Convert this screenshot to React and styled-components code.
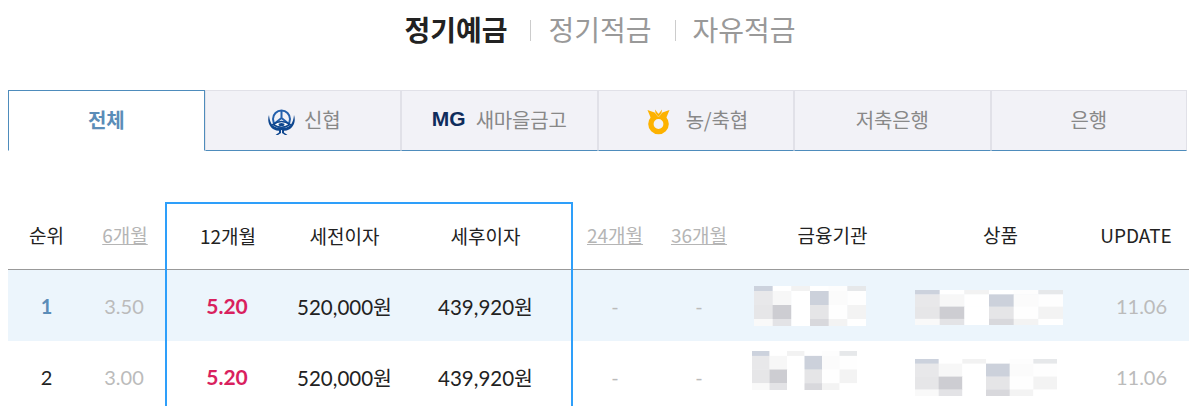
import React from 'react'
import styled, { createGlobalStyle } from 'styled-components'

const CJK = '"Noto Sans CJK KR", "Noto Sans", sans-serif'
const NUM = 'Lato, "Noto Sans CJK KR", sans-serif'

const GlobalStyle = createGlobalStyle`
  html, body {
    margin: 0;
    padding: 0;
    background: #fff;
    overflow: hidden;
  }
  body {
    font-family: ${CJK};
    height: 406px;
  }
`

const tabs = [
  { label: '전체' },
  { label: '신협', icon: 'cu' },
  { label: '새마을금고', icon: 'mg' },
  { label: '농/축협', icon: 'nh' },
  { label: '저축은행' },
  { label: '은행' },
]

const mosaicA = [
  ['#ccd2dd', '#ffffff', '#f2f2f2', '#ffffff', '#fdfdfd', '#e6e8ea'],
  ['#e8e8ea', '#f7f7f7', '#ffffff', '#ccd1db', '#fbfbfb', '#fefefe'],
  ['#e6e6e8', '#cdcdd2', '#ffffff', '#e5e5e7', '#fefefe', '#f3f3f3'],
  ['#f9f9f9', '#e3e3e6', '#ffffff', '#d8d8dc', '#f3f3f3', '#ffffff'],
]

const rows = [
  {
    rank: '1', six: '3.50', top: true,
    org: { w: 112, h: 40, dx: 13, dy: 0 },
    product: { w: 148, h: 35, dx: -9, dy: 4 },
  },
  {
    rank: '2', six: '3.00',
    org: { w: 105, h: 39, dx: 11, dy: -12 },
    product: { w: 142, h: 37, dx: -9, dy: 2 },
  },
]

function Mosaic({ w, h }) {
  const ys = [0, 0.125, 0.475, 0.825, 1]
  return (
    <svg width={w} height={h} viewBox={`0 0 ${w} ${h}`}>
      {mosaicA.map((line, r) =>
        line.map((fill, c) => (
          <rect
            key={`${r}-${c}`}
            x={(c * w) / 6}
            y={ys[r] * h}
            width={w / 6 + 0.3}
            height={(ys[r + 1] - ys[r]) * h + 0.3}
            fill={fill}
          />
        ))
      )}
    </svg>
  )
}

function CuIcon() {
  return (
    <CuSvg width="27" height="26" viewBox="0 0 27 26" fill="none">
      <circle cx="13.500" cy="10" r="8.500" stroke="#2460ac" strokeWidth="2" />
      <path d="M13.500 2v7M6 15l7.500-6 7.500 6" stroke="#2460ac" strokeWidth="2" />
      <path d="M5 15.500Q13.500 9.500 22 15.500Q13.500 21 5 15.500z" fill="#fff" stroke="#0f478f" strokeWidth="1.600" />
      <ellipse cx="13.500" cy="15.500" rx="3" ry="1.500" fill="#0f478f" />
      <path
        d="M1 6C-1 12 1 18 6 20.500c3 1.500 5.500 1.500 7.500.5 2 1 4.500 1 7.500-.5 5-2.500 7-8.500 5-14.500-.5 5.500-2 9.500-5.500 11.500-2.500 1.500-5 1.800-7 .8-2 1-4.500.7-7-.8C3 15.500 1.500 11.500 1 6z"
        fill="#0f478f"
      />
      <path d="M11 21h2v3l-3 2H7.500l3.500-2.500zM16 21h-2v3l3 2h2.500L16 23.500z" fill="#0f478f" />
    </CuSvg>
  )
}

function NhIcon() {
  return (
    <svg width="24" height="26" viewBox="0 0 24 26" fill="none">
      <circle cx="11.500" cy="15" r="7.600" stroke="#fdb200" strokeWidth="5.400" />
      <path d="M.5 1L7.500 3.500 11.500 7.500 15.500 3.500 22.500 1 19 9.500H4z" fill="#fdb200" />
      <path d="M8 .5l3.500 4.500L15 .5 14 7.500H9z" fill="#fdb200" />
      <path d="M7.800 3.500L11.500 8 15.200 3.500" stroke="#f7d27a" strokeWidth="0.800" />
    </svg>
  )
}

export default function App() {
  return (
    <Page>
      <GlobalStyle />
      <Products>
        <Product $active>정기예금</Product>
        <Sep />
        <Product>정기적금</Product>
        <Sep />
        <Product>자유적금</Product>
      </Products>

      <Tabs>
        {tabs.map((t, i) => (
          <Tab key={t.label} $active={i === 0}>
            {t.icon === 'cu' && <CuIcon />}
            {t.icon === 'mg' && <MgLogo>MG</MgLogo>}
            {t.icon === 'nh' && <NhSlot><NhIcon /></NhSlot>}
            <span>{t.label}</span>
          </Tab>
        ))}
      </Tabs>

      <Table>
        <HeadRow>
          <Cell $w={77}>순위</Cell>
          <LinkCell $w={80}>6개월</LinkCell>
          <Cell $w={124} $left $head>12개월</Cell>
          <Cell $w={111} $head>세전이자</Cell>
          <Cell $w={173} $right $head>세후이자</Cell>
          <LinkCell $w={84}>24개월</LinkCell>
          <LinkCell $w={84}>36개월</LinkCell>
          <Cell $w={183}>금융기관</Cell>
          <Cell $w={153}>상품</Cell>
          <Cell $w={112} $pl={6}>UPDATE</Cell>
        </HeadRow>
        {rows.map((r) => (
          <BodyRow key={r.rank} $top={r.top}>
            <Rank $w={77} $top={r.top}>{r.rank}</Rank>
            <Faint $w={80} $pr={2}>{r.six}</Faint>
            <Rate $w={124} $left $pr={2}>5.20</Rate>
            <Amount $w={111}>520,000원</Amount>
            <Amount $w={173} $right>439,920원</Amount>
            <Faint $w={84}>-</Faint>
            <Faint $w={84}>-</Faint>
            <ImageCell $w={183}>
              <Shift $dx={r.org.dx} $dy={r.org.dy}>
                <Mosaic w={r.org.w} h={r.org.h} />
              </Shift>
            </ImageCell>
            <ImageCell $w={153}>
              <Shift $dx={r.product.dx} $dy={r.product.dy}>
                <Mosaic w={r.product.w} h={r.product.h} />
              </Shift>
            </ImageCell>
            <Faint $w={112} $pl={17}>11.06</Faint>
          </BodyRow>
        ))}
      </Table>
    </Page>
  )
}

const Page = styled.div`
  width: 1189px;
  height: 406px;
  overflow: hidden;
`

const Products = styled.div`
  height: 90px;
  padding-top: 10px;
  box-sizing: border-box;
  display: flex;
  justify-content: center;
  align-items: flex-start;
  gap: 20px;
  padding-left: 11px;
`

const Product = styled.div`
  font-size: 28px;
  line-height: 38px;
  color: ${(p) => (p.$active ? '#222' : '#999')};
  font-weight: ${(p) => (p.$active ? 700 : 400)};
`

const Sep = styled.i`
  width: 1px;
  height: 21px;
  margin: 10px -3px 0 3px;
  background: #ccc;
`

const Tabs = styled.div`
  display: flex;
  margin-left: 8px;
  height: 61px;
  width: 1179px;
`

const Tab = styled.div`
  width: 196.5px;
  box-sizing: border-box;
  display: flex;
  align-items: center;
  justify-content: center;
  gap: 5px;
  font-size: 20px;
  letter-spacing: -0.2px;
  padding-bottom: 3px;
  color: ${(p) => (p.$active ? '#5b8db8' : '#888')};
  font-weight: ${(p) => (p.$active ? 700 : 400)};
  background: ${(p) => (p.$active ? '#fff' : '#f2f2f7')};
  border-top: 1px solid ${(p) => (p.$active ? '#4e8cbc' : '#e1e1e8')};
  border-left: 1px solid ${(p) => (p.$active ? '#4e8cbc' : '#e1e1e8')};
  border-right: 1px solid ${(p) => (p.$active ? '#4e8cbc' : '#e1e1e8')};
  border-bottom: 1px solid ${(p) => (p.$active ? '#fff' : '#4e8cbc')};
`

const CuSvg = styled.svg`
  margin: 6px 4px 0 3px;
`

const MgLogo = styled.b`
  font-family: 'Liberation Sans', Arial, sans-serif;
  font-size: 21px;
  letter-spacing: 0;
  color: #0f2c5c;
  margin-right: 5px;
`

const NhSlot = styled.span`
  display: flex;
  margin: 6px 10px 0 3px;
`

const Table = styled.div`
  margin-top: 51px;
  margin-left: 8px;
  width: 1181px;
`

const HeadRow = styled.div`
  display: flex;
  height: 68px;
  border-bottom: 1px solid #999;
  box-sizing: border-box;
`

const BodyRow = styled.div`
  display: flex;
  height: 71px;
  background: ${(p) => (p.$top ? '#ecf5fc' : '#fff')};
`

const Cell = styled.div`
  width: ${(p) => p.$w}px;
  flex: none;
  box-sizing: border-box;
  display: flex;
  align-items: center;
  justify-content: center;
  font-size: 19px;
  padding-bottom: ${(p) => (p.$head ? '4px' : '2px')};
  padding-left: ${(p) => p.$pl || 0}px;
  padding-right: ${(p) => p.$pr || 0}px;
  color: #222;
  border-left: ${(p) => (p.$left ? '2px solid #2e9ffa' : 'none')};
  border-right: ${(p) => (p.$right ? '2px solid #2e9ffa' : 'none')};
  border-top: ${(p) => (p.$head ? '2px solid #2e9ffa' : 'none')};
  margin-bottom: ${(p) => (p.$head ? '-1px' : '0')};
`

const LinkCell = styled(Cell)`
  color: #b5b5b5;
  text-decoration: underline;
`

const ImageCell = styled(Cell)`
  justify-content: flex-start;
  padding-bottom: 0;
`

const Num = styled(Cell)`
  font-family: ${NUM};
  font-size: 20px;
  padding-bottom: 0;
`

const Rank = styled(Num)`
  color: ${(p) => (p.$top ? '#5b8db8' : '#222')};
  font-weight: ${(p) => (p.$top ? 700 : 400)};
`

const Faint = styled(Num)`
  color: #bbb;
`

const Rate = styled(Num)`
  font-size: 21px;
  color: #d9215e;
  font-weight: 700;
`

const Amount = styled(Num)`
  font-size: 20.5px;
  color: #222;
`

const Shift = styled.div`
  display: flex;
  margin-left: ${(p) => p.$dx}px;
  margin-top: ${(p) => p.$dy}px;
`
